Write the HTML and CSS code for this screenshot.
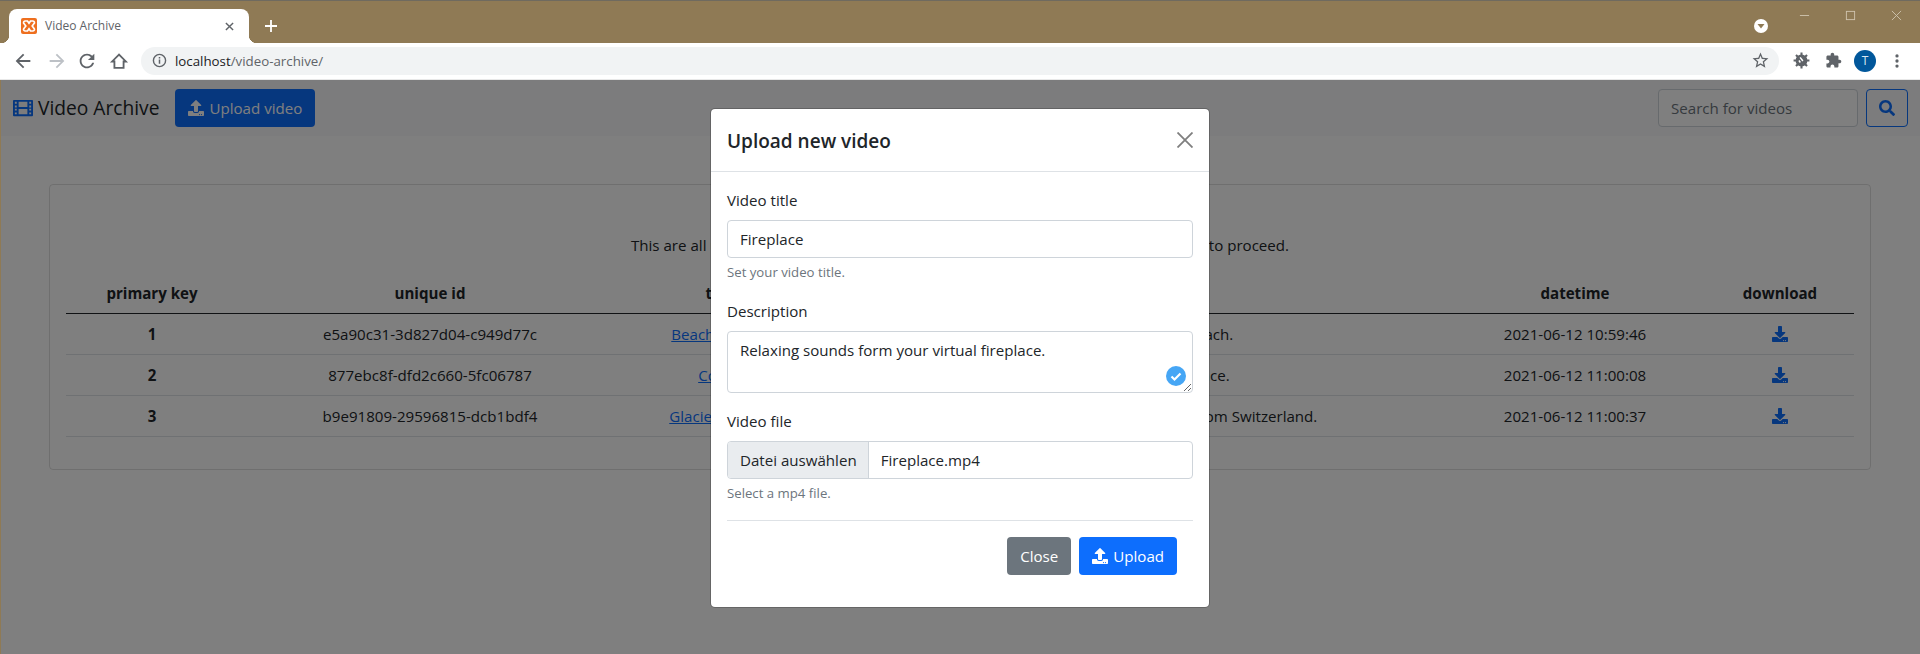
FILE: index.html
```html
<!DOCTYPE html>
<html lang="en">
<head>
    <meta charset="UTF-8">
    <title>Video Archive</title>
    <meta name="viewport" content="width=device-width, initial-scale=1.0">
    <link rel="stylesheet" href="styles.css">
</head>
<body>
    <!-- browser frame -->
    <header class="tabstrip">
        <div class="tab">
            <svg class="favicon" viewBox="0 0 16 16">
                <rect width="16" height="16" rx="2" fill="#ee6f1f"/>
                <path d="M4 3h2.500l1.500 2.300 1.500-2.300h2.500a1.500 1.500 0 0 1 1 2.600l-1.800 2.400 1.800 2.400a1.500 1.500 0 0 1-1 2.600h-2.500l-1.500-2.300-1.500 2.300h-2.500a1.500 1.500 0 0 1-1-2.600l1.800-2.400-1.800-2.400a1.500 1.500 0 0 1 1-2.600z" fill="none" stroke="#fff" stroke-width="1.700"/>
            </svg>
            <span class="tab-title">Video Archive</span>
            <svg class="tab-close" viewBox="0 0 10 10"><path d="M1 1l8 8M9 1l-8 8" stroke="#5f6368" stroke-width="1.600"/></svg>
        </div>
        <svg class="new-tab" viewBox="0 0 12 12"><path d="M6 0v12M0 6h12" stroke="#fff" stroke-width="1.800"/></svg>
        <div class="profile-drop">
            <svg viewBox="0 0 14 14"><circle cx="7" cy="7" r="7" fill="#fff"/><path d="M3.500 5h7l-3.500 4.500z" fill="#8f7a55"/></svg>
        </div>
        <div class="win-controls">
            <span class="win-btn"><svg viewBox="0 0 12 12"><path d="M1 6h10" stroke="#cfc4ae"/></svg></span>
            <span class="win-btn"><svg viewBox="0 0 12 12"><rect x="1.500" y="1.500" width="9" height="9" fill="none" stroke="#cfc4ae"/></svg></span>
            <span class="win-btn"><svg viewBox="0 0 12 12"><path d="M1 1l10 10M11 1l-10 10" stroke="#cfc4ae"/></svg></span>
        </div>
    </header>

    <div class="toolbar">
        <svg class="tool" viewBox="0 0 24 24"><path d="M20 11H7.830l5.590-5.590L12 4l-8 8 8 8 1.410-1.410L7.830 13H20v-2z"/></svg>
        <svg class="tool tool-off" viewBox="0 0 24 24"><path d="M4 11h12.170l-5.590-5.590L12 4l8 8-8 8-1.410-1.410L16.170 13H4v-2z"/></svg>
        <svg class="tool" viewBox="0 0 24 24"><path d="M17.650 6.350C16.200 4.900 14.210 4 12 4c-4.420 0-7.990 3.580-7.990 8s3.570 8 7.990 8c3.730 0 6.840-2.550 7.730-6h-2.080c-.82 2.330-3.040 4-5.650 4-3.310 0-6-2.690-6-6s2.690-6 6-6c1.660 0 3.140.69 4.220 1.780L13 11h7V4l-2.350 2.350z"/></svg>
        <svg class="tool" viewBox="0 0 24 24"><path d="M12 5L4.500 12.500H7V19.500H17V12.500H19.500z" fill="none" stroke="#5f6368" stroke-width="2"/></svg>
        <div class="omnibox">
            <svg class="omni-info" viewBox="0 0 16 16"><circle cx="8" cy="8" r="6.500" fill="none" stroke="#5f6368" stroke-width="1.500"/><path d="M7.200 7h1.600v4.500H7.200zM7.200 4.300h1.600v1.600H7.200z" fill="#5f6368"/></svg>
            <span class="omni-url"><span class="omni-host">localhost</span>/video-archive/</span>
            <svg class="omni-star" viewBox="0 0 24 24"><path d="M22 9.240l-7.190-.62L12 2 9.190 8.630 2 9.240l5.460 4.730L5.820 21 12 17.270 18.180 21l-1.630-7.030L22 9.240zM12 15.400l-3.760 2.270 1-4.280-3.320-2.880 4.380-.38L12 6.100l1.710 4.040 4.380.38-3.320 2.880 1 4.280L12 15.400z"/></svg>
        </div>
        <span class="tool-slot">
            <svg class="ext-bug" viewBox="0 0 24 24">
                <circle cx="12" cy="12" r="7.500"/>
                <path d="M12 2v4M12 18v4M2 12h4M18 12h4M5 5l3 3M16 16l3 3M19 5l-3 3M8 16l-3 3" stroke="#5f6368" stroke-width="2.600"/>
                <path d="M9.500 8.500l1.500-1 3.500 4.500-1.500 1.200zM8 12.500l1.500-1 1.800 2.300-1.500 1.200z" fill="#fff"/>
            </svg>
        </span>
        <span class="tool-slot">
            <svg class="ext-puzzle" viewBox="0 0 24 24"><path d="M20.500 11H19V7c0-1.100-.9-2-2-2h-4V3.500C13 2.120 11.880 1 10.500 1S8 2.120 8 3.500V5H4c-1.100 0-1.990.9-1.990 2v3.800H3.500c1.490 0 2.700 1.210 2.700 2.700s-1.210 2.700-2.700 2.700H2V20c0 1.100.9 2 2 2h3.800v-1.500c0-1.490 1.210-2.700 2.700-2.700 1.490 0 2.700 1.210 2.700 2.700V22H17c1.100 0 2-.9 2-2v-4h1.500c1.380 0 2.500-1.120 2.500-2.500S21.880 11 20.500 11z"/></svg>
        </span>
        <span class="avatar">T</span>
        <svg class="tool" viewBox="0 0 24 24"><circle cx="12" cy="6.500" r="1.800"/><circle cx="12" cy="12" r="1.800"/><circle cx="12" cy="17.500" r="1.800"/></svg>
    </div>

    <!-- the page itself -->
    <div class="page">
        <nav class="navbar">
            <a class="brand">
                <svg class="brand-icon" viewBox="0 0 512 512"><path fill-rule="evenodd" d="M24 48h464a24 24 0 0 1 24 24v368a24 24 0 0 1-24 24H24a24 24 0 0 1-24-24V72a24 24 0 0 1 24-24zM48 96v48h48V96zm0 96v48h48v-48zm0 80v48h48v-48zm0 96v48h48v-48zM416 96v48h48V96zm0 96v48h48v-48zm0 80v48h48v-48zm0 96v48h48v-48zM144 96v136h224V96zm0 184v136h224V280z"/></svg>
                Video Archive
            </a>
            <button class="btn btn-primary">
                <svg class="fa" viewBox="0 0 512 512"><path d="M296 384h-80c-13.300 0-24-10.700-24-24V192h-87.700c-17.800 0-26.700-21.500-14.100-34.100L242.300 5.700c7.500-7.500 19.800-7.500 27.300 0l152.200 152.200c12.600 12.600 3.700 34.100-14.100 34.100H320v168c0 13.300-10.700 24-24 24zm216-8v112c0 13.300-10.700 24-24 24H24c-13.300 0-24-10.700-24-24V376c0-13.300 10.700-24 24-24h136v8c0 30.900 25.100 56 56 56h80c30.900 0 56-25.100 56-56v-8h136c13.300 0 24 10.700 24 24zm-124 88c0-11-9-20-20-20s-20 9-20 20 9 20 20 20 20-9 20-20zm64 0c0-11-9-20-20-20s-20 9-20 20 9 20 20 20 20-9 20-20z"/></svg>
                Upload video
            </button>
            <form class="search">
                <input class="form-control search-input" type="text" placeholder="Search for videos">
                <button class="btn btn-outline" type="button">
                    <svg class="fa" viewBox="0 0 512 512"><path d="M505 442.700L405.300 343c-4.500-4.500-10.600-7-17-7H372c27.600-35.300 44-79.700 44-128C416 93.100 322.900 0 208 0S0 93.100 0 208s93.100 208 208 208c48.300 0 92.700-16.400 128-44v16.300c0 6.400 2.500 12.500 7 17l99.700 99.700c9.400 9.400 24.600 9.400 33.900 0l28.300-28.300c9.400-9.400 9.400-24.600.1-34zM208 336c-70.700 0-128-57.200-128-128 0-70.700 57.200-128 128-128 70.700 0 128 57.200 128 128 0 70.700-57.200 128-128 128z"/></svg>
                </button>
            </form>
        </nav>

        <main class="card">
            <h5 class="card-title">Uploaded videos</h5>
            <p class="card-text">This are all uploaded videos. Click on a title or on the download icon of a video file to proceed.</p>
            <table class="table">
                <thead>
                    <tr>
                        <th class="col-key">primary key</th>
                        <th class="col-uid">unique id</th>
                        <th class="col-title">title</th>
                        <th>description</th>
                        <th class="col-date">datetime</th>
                        <th class="col-dl">download</th>
                    </tr>
                </thead>
                <tbody>
                    <tr>
                        <th>1</th>
                        <td>e5a90c31-3d827d04-c949d77c</td>
                        <td><a href="#">Beach Sunrise</a></td>
                        <td>Sounds of waves on a beach.</td>
                        <td>2021-06-12 10:59:46</td>
                        <td><svg class="fa dl" viewBox="0 0 512 512"><use href="#dl-icon"/></svg></td>
                    </tr>
                    <tr>
                        <th>2</th>
                        <td>877ebc8f-dfd2c660-5fc06787</td>
                        <td><a href="#">Coffee</a></td>
                        <td>Sounds from a coffee place.</td>
                        <td>2021-06-12 11:00:08</td>
                        <td><svg class="fa dl" viewBox="0 0 512 512"><use href="#dl-icon"/></svg></td>
                    </tr>
                    <tr>
                        <th>3</th>
                        <td>b9e91809-29596815-dcb1bdf4</td>
                        <td><a href="#">Glacier Stream</a></td>
                        <td>The sound of melting glacier water from Switzerland.</td>
                        <td>2021-06-12 11:00:37</td>
                        <td><svg class="fa dl" viewBox="0 0 512 512"><use href="#dl-icon"/></svg></td>
                    </tr>
                </tbody>
            </table>
        </main>

        <svg class="defs" width="0" height="0"><defs><path id="dl-icon" d="M216 0h80c13.300 0 24 10.700 24 24v168h87.700c17.800 0 26.700 21.500 14.100 34.100L269.700 378.300c-7.500 7.500-19.800 7.500-27.300 0L90.100 226.100c-12.600-12.600-3.700-34.100 14.100-34.100H192V24c0-13.300 10.700-24 24-24zm296 376v112c0 13.300-10.700 24-24 24H24c-13.300 0-24-10.700-24-24V376c0-13.300 10.700-24 24-24h146.700l49 49c20.100 20.100 52.500 20.100 72.600 0l49-49H488c13.300 0 24 10.700 24 24zm-124 88c0-11-9-20-20-20s-20 9-20 20 9 20 20 20 20-9 20-20zm64 0c0-11-9-20-20-20s-20 9-20 20 9 20 20 20 20-9 20-20z"/></defs></svg>

        <div class="backdrop"></div>

        <div class="modal">
            <div class="modal-header">
                <h5 class="modal-title">Upload new video</h5>
                <svg class="modal-close" viewBox="0 0 16 16"><path d="M.5.5l15 15M15.500.5l-15 15" stroke="#7f7f7f" stroke-width="1.800"/></svg>
            </div>
            <form class="modal-body">
                <div class="field">
                    <label class="form-label">Video title</label>
                    <input class="form-control" type="text" value="Fireplace">
                    <div class="form-text">Set your video title.</div>
                </div>
                <div class="field textarea-wrap">
                    <label class="form-label">Description</label>
                    <textarea class="form-control">Relaxing sounds form your virtual fireplace.</textarea>
                    <svg class="grammar-badge" viewBox="0 0 20 20"><circle cx="10" cy="10" r="10" fill="#46a6f5"/><path d="M5.500 10.500l3 3 6-6" fill="none" stroke="#fff" stroke-width="2.200"/></svg>
                </div>
                <div class="field">
                    <label class="form-label">Video file</label>
                    <div class="file-input">
                        <span class="file-btn">Datei auswählen</span>
                        <span class="file-name">Fireplace.mp4</span>
                    </div>
                    <div class="form-text">Select a mp4 file.</div>
                </div>
                <hr class="rule">
                <div class="form-actions">
                    <button class="btn btn-secondary" type="button">Close</button>
                    <button class="btn btn-primary" type="button">
                        <svg class="fa" viewBox="0 0 512 512"><path d="M296 384h-80c-13.300 0-24-10.700-24-24V192h-87.700c-17.800 0-26.700-21.500-14.100-34.100L242.300 5.700c7.500-7.500 19.800-7.500 27.300 0l152.200 152.200c12.600 12.600 3.700 34.100-14.100 34.100H320v168c0 13.300-10.700 24-24 24zm216-8v112c0 13.300-10.700 24-24 24H24c-13.300 0-24-10.700-24-24V376c0-13.300 10.700-24 24-24h136v8c0 30.900 25.100 56 56 56h80c30.900 0 56-25.100 56-56v-8h136c13.300 0 24 10.700 24 24zm-124 88c0-11-9-20-20-20s-20 9-20 20 9 20 20 20 20-9 20-20zm64 0c0-11-9-20-20-20s-20 9-20 20 9 20 20 20 20-9 20-20z"/></svg>
                        Upload
                    </button>
                </div>
            </form>
        </div>
    </div>
</body>
</html>
```

FILE: styles.css
```css
* {
    box-sizing: border-box;
}
html, body {
    margin: 0;
    height: 100%;
    overflow: hidden;
}
body {
    font-family: "Open Sans", "Liberation Sans", sans-serif;
    font-size: 15.1px;
    line-height: 24px;
    color: #212529;
    background: #fff;
    display: flex;
    flex-direction: column;
}

/* browser frame */
.tabstrip {
    height: 43px;
    flex: none;
    display: flex;
    background: #8f7a55;
    border-top: 1px solid #6f6a5f;
    padding: 8px 0 0 9px;
    position: relative;
}
.tab {
    width: 240px;
    height: 34px;
    background: #fff;
    border-radius: 8px 8px 0 0;
    display: flex;
    align-items: center;
    padding: 0 12px;
    position: relative;
}
.tab::before, .tab::after {
    content: "";
    position: absolute;
    bottom: 0;
    width: 8px;
    height: 8px;
}
.tab::before {
    left: -8px;
    background: radial-gradient(circle at 0 0, transparent 8px, #fff 8.500px);
}
.tab::after {
    right: -8px;
    background: radial-gradient(circle at 100% 0, transparent 8px, #fff 8.500px);
}
.favicon {
    width: 16px;
    height: 16px;
    flex: none;
}
.tab-title {
    font-size: 12px;
    color: #5f6368;
    margin-left: 8px;
    flex: 1;
}
.tab-close {
    width: 9px;
    height: 9px;
    margin-right: 3px;
}
.new-tab {
    width: 12px;
    height: 12px;
    margin: 11px 0 0 16px;
}
.profile-drop {
    margin: 10px 13px 0 auto;
    width: 14px;
    height: 14px;
    display: flex;
}
.win-controls {
    display: flex;
    height: 28px;
    margin-top: -8px;
    margin-right: 1px;
}
.win-btn {
    width: 46px;
    display: flex;
    align-items: center;
    justify-content: center;
}
.win-btn svg {
    width: 11px;
    height: 11px;
}
.toolbar {
    height: 37px;
    flex: none;
    display: flex;
    align-items: center;
    gap: 8px;
    padding: 0 11px 1px 11px;
    background: #fff;
    border-bottom: 1px solid #e8e8e8;
}
.tool {
    width: 22px;
    height: 22px;
    margin: 0 1px;
    flex: none;
    fill: #5f6368;
}
.tool-off {
    fill: #bdc1c6;
    margin: 0 -1px 0 3px;
}
.tool-slot {
    width: 24px;
    height: 24px;
    flex: none;
    display: flex;
    align-items: center;
    justify-content: center;
}
.ext-bug {
    width: 19px;
    height: 19px;
    fill: #5f6368;
}
.ext-puzzle {
    width: 17px;
    height: 17px;
    fill: #5f6368;
}
.omnibox {
    flex: 1;
    height: 28px;
    margin: 0 2px;
    background: #f1f3f4;
    border-radius: 14px;
    display: flex;
    align-items: center;
    padding: 0 8px 0 11px;
}
.omni-info {
    width: 15px;
    height: 15px;
}
.omni-url {
    font-size: 13.300px;
    color: #5f6368;
    margin-left: 8px;
    flex: 1;
}
.omni-host {
    color: #202124;
}
.omni-star {
    width: 19px;
    height: 19px;
    fill: #5f6368;
    margin-right: 1px;
}
.avatar {
    width: 22px;
    height: 22px;
    margin: 0 1px;
    border-radius: 50%;
    background: #01579b;
    color: #dbe7f3;
    font-size: 12px;
    line-height: 22px;
    text-align: center;
    flex: none;
}

/* page */
.page {
    flex: 1;
    position: relative;
    border-left: 1px solid #8f7a55;
}
.navbar {
    height: 56px;
    background: #f8f9fa;
    display: flex;
    align-items: center;
    padding: 0 12px;
}
.brand {
    font-size: 19.200px;
    display: flex;
    align-items: center;
    gap: 5px;
    margin-right: 16px;
}
.brand-icon {
    width: 20px;
    height: 20px;
    fill: #0d6efd;
}
.btn {
    height: 38px;
    padding: 0 12px;
    font: inherit;
    border: 1px solid transparent;
    border-radius: 4px;
    display: inline-flex;
    align-items: center;
    gap: 5px;
}
.btn-primary {
    background: #0d6efd;
    color: #fff;
}
.btn-secondary {
    background: #6c757d;
    color: #fff;
}
.btn-outline {
    border-color: #0d6efd;
    color: #0d6efd;
    background: transparent;
    width: 42px;
    justify-content: center;
}
.fa {
    width: 16px;
    height: 16px;
    fill: currentColor;
}
.search {
    margin-left: auto;
    display: flex;
    gap: 8px;
}
.form-control {
    display: block;
    width: 100%;
    height: 38px;
    padding: 6px 12px;
    font: inherit;
    color: #212529;
    background: #fff;
    border: 1px solid #ced4da;
    border-radius: 4px;
}
.form-control::placeholder {
    color: #6c757d;
}
.search-input {
    width: 200px;
}
textarea.form-control {
    height: 62px;
}
.card {
    margin: 48px 49px 0 48px;
    border: 1px solid rgba(0, 0, 0, 0.125);
    border-radius: 4px;
    padding: 16px;
    text-align: center;
}
.card-title {
    margin: 0 0 8px;
    font-size: 19px;
    line-height: 24px;
    font-weight: 500;
}
.card-text {
    margin: 0 0 16px;
}
.table {
    width: 100%;
    border-collapse: collapse;
    table-layout: fixed;
    margin-bottom: 16px;
}
.table th, .table td {
    padding: 8px;
    border-bottom: 1px solid #dee2e6;
    font-weight: 400;
}
.table th {
    font-weight: 700;
}
.table thead th {
    border-bottom: 1px solid #212529;
}
.col-key { width: 172px; }
.col-uid { width: 384px; }
.col-title { width: 198px; }
.col-date { width: 262px; }
.col-dl { width: 148px; }
.table a {
    color: #0d6efd;
}
.dl {
    color: #0d6efd;
    vertical-align: -2px;
}
.defs {
    position: absolute;
}

/* modal, lies over the page */
.backdrop {
    position: absolute;
    inset: 0;
    background: rgba(0, 0, 0, 0.5);
}
.modal {
    position: absolute;
    top: 28px;
    left: 709px;
    width: 500px;
    background: #fff;
    border: 1px solid rgba(0, 0, 0, 0.2);
    border-radius: 5px;
    background-clip: padding-box;
}
.modal-header {
    height: 63px;
    display: flex;
    align-items: center;
    justify-content: space-between;
    padding: 2px 16px 0;
    border-bottom: 1px solid #dee2e6;
}
.modal-title {
    margin: 0;
    font-size: 19px;
    font-weight: 600;
    line-height: 24px;
}
.modal-close {
    width: 16px;
    height: 16px;
    margin-top: -2px;
}
.modal-body {
    padding: 16px;
    display: flex;
    flex-direction: column;
}
.field {
    margin-bottom: 16px;
}
.field:nth-child(3) {
    margin-bottom: 0;
}
.form-label {
    display: block;
    margin-bottom: 8px;
}
.form-text {
    margin-top: 4px;
    font-size: 13.200px;
    line-height: 21px;
    color: #6c757d;
}
.textarea-wrap {
    position: relative;
}
.grammar-badge {
    position: absolute;
    right: 7px;
    bottom: 7px;
    width: 20px;
    height: 20px;
}
.file-input {
    height: 38px;
    display: flex;
    align-items: center;
    border: 1px solid #ced4da;
    border-radius: 4px;
    overflow: hidden;
}
.file-btn {
    height: 100%;
    padding: 6px 11px 6px 12px;
    background: #e9ecef;
    border-right: 1px solid #ced4da;
}
.file-name {
    padding: 0 12px;
}
.rule {
    width: 100%;
    height: 1px;
    margin: 16px 0;
    border: 0;
    background: #dee2e6;
}
.form-actions {
    display: flex;
    justify-content: flex-end;
    gap: 8px;
    padding: 0 16px 16px;
}
```
